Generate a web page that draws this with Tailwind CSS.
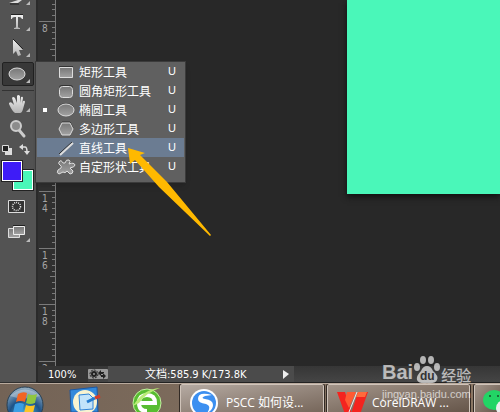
<!DOCTYPE html>
<html lang="zh-CN">
<head>
  <meta charset="UTF-8" />
  <meta name="viewport" content="width=device-width, initial-scale=1.0"/>
  <title>PSCC</title>
  <!-- Tailwind CSS CDN -->
  <script src="https://cdn.jsdelivr.net/npm/@tailwindcss/browser@4"></script>
</head>
<body class="relative h-screen overflow-hidden flex flex-col bg-[#282828] text-xs text-white font-['Noto_Sans','Noto_Sans_CJK_SC',sans-serif]">

  <!-- Shared gradients -->
  <svg class="absolute w-0 h-0" aria-hidden="true">
    <defs>
      <linearGradient id="metal" x1="0" y1="0" x2="0" y2="1"><stop offset="0" stop-color="#777"/><stop offset="1" stop-color="#a2a2a2"/></linearGradient>
      <linearGradient id="silver" x1="0" y1="0" x2="0" y2="1"><stop offset="0" stop-color="#f0f0f0"/><stop offset="1" stop-color="#b4b4b4"/></linearGradient>
      <radialGradient id="orb" cx=".5" cy=".8" r=".8"><stop offset="0" stop-color="#4fc3ea"/><stop offset=".55" stop-color="#1d5288"/><stop offset="1" stop-color="#9db5c6"/></radialGradient>
    </defs>
  </svg>

  <main class="flex-1 min-h-0 flex">
    <!-- Toolbar -->
    <aside class="w-9 shrink-0 flex flex-col items-center bg-[#535353] border-b border-[#303030]">
      <button class="block h-2 w-full overflow-hidden" aria-label="Pen">
        <svg class="block w-full h-2" viewBox="0 0 36 8"><path d="M9 3 18 0h4l-4 3Z" fill="#ddd"/><path d="M10 4h9" stroke="#222"/><path d="M30 1v4h-4Z" fill="#bbb"/></svg>
      </button>
      <button class="block h-7 w-full" aria-label="Type">
        <svg class="block w-full h-7" viewBox="0 0 36 28"><path d="M11 7h12v4h-1q-1-2-3-2h-1v10q0 1 2 1v1h-6v-1q2 0 2-1V9h-1q-3 0-3 2h-1Z" fill="url(#silver)"/><path d="M11 6.5h12" stroke="#222"/><path d="M30 19v4h-4Z" fill="#bbb"/></svg>
      </button>
      <button class="block h-[26px] w-full" aria-label="Path selection">
        <svg class="block w-full h-[26px]" viewBox="0 0 36 26"><path d="M13 3v15l3-3 2 5 3-1-2-5h4Z" fill="url(#silver)"/><path d="m13 3 10 10" stroke="#222"/><path d="M30 17v4h-4Z" fill="#bbb"/></svg>
      </button>
      <button class="block h-6 w-8 rounded-xs bg-[#383838] border border-[#222]" aria-label="Ellipse">
        <svg class="block w-full h-[22px]" viewBox="0 0 30 22"><ellipse cx="14" cy="11" rx="8" ry="6" fill="url(#metal)" stroke="#ddd"/><path d="M27 16v4h-4Z" fill="#bbb"/></svg>
      </button>
      <hr class="mt-1 w-8 border-t border-[#333]">
      <button class="block h-[26px] w-full" aria-label="Hand">
        <svg class="block w-full h-[26px]" viewBox="0 0 36 26"><path d="M9 12q2-2 4 1l1 1-2-7q1-2 3 0l2 5V5q1-2 3 0v7l1-6q2-1 2 1l-1 6 1-3q2-1 2 1l-2 7q-1 4-3 4h-5q-3-2-6-9Z" fill="url(#silver)"/><path d="M30 17v4h-4Z" fill="#bbb"/></svg>
      </button>
      <button class="block h-6 w-full" aria-label="Zoom">
        <svg class="block w-full h-6" viewBox="0 0 36 24"><path d="m19 13 5 6" stroke="#ccc" stroke-width="3" stroke-linecap="round"/><circle cx="16" cy="9" r="5" fill="#8c8c8c" stroke="#ccc" stroke-width="2"/></svg>
      </button>
      <button class="block h-4 w-full" aria-label="Switch colors">
        <svg class="block w-full h-4" viewBox="0 0 36 16"><path d="M5 7h7v7H5Z" fill="#ddd"/><path d="M2.5 4.5h6v6h-6Z" fill="#222" stroke="#ddd"/><path d="M22 6h3q2 0 2 5" fill="none" stroke="#ddd" stroke-width="1.5"/><path d="m19 6 4-3v6ZM24 10h6l-3 4Z" fill="#ddd"/></svg>
      </button>
      <div class="mt-1 w-full h-9 grid grid-cols-3 grid-rows-3 px-[2px] pb-2">
        <button class="col-start-1 row-start-1 z-10 size-5 bg-[#3e1cf7] border border-white outline outline-[#222]" aria-label="Foreground color"></button>
        <button class="col-start-2 row-start-2 size-5 bg-[#4af7b9] border border-white outline outline-[#222]" aria-label="Background color"></button>
      </div>
      <button class="block h-5 w-full" aria-label="Quick mask">
        <svg class="block w-full h-5" viewBox="0 0 36 20"><path d="M8.5 3.5h16v12h-16Z" fill="#333" stroke="#ddd"/><circle cx="16.5" cy="9.5" r="4" fill="none" stroke="#eee" stroke-width="1.5" stroke-dasharray="1 1"/></svg>
      </button>
      <button class="mt-1 block h-6 w-full" aria-label="Screen mode">
        <svg class="block w-full h-6" viewBox="0 0 36 24"><path d="M8.5 7.5h11v9h-11Z" fill="url(#metal)" stroke="#ddd"/><path d="M13.5 5.5h11v8h-11Z" fill="url(#metal)" stroke="#eee"/><path d="M13 4.5h12" stroke="#222"/><path d="M30 17v4h-4Z" fill="#bbb"/></svg>
      </button>
    </aside>

    <section class="flex-1 min-w-0 flex flex-col border-l-2 border-[#2a2a2a]">
      <div class="flex-1 min-h-0 flex">
        <!-- Vertical ruler -->
        <div class="w-[18px] shrink-0 overflow-hidden bg-[#303030]">
          <svg class="block w-[18px] h-[400px] font-['DejaVu_Sans_Condensed','DejaVu_Sans',sans-serif]" viewBox="0 0 18 400">
            <defs>
              <path id="ticks" d="M1 .5h16M14 6.5h3M14 11.5h3M14 17.5h3M14 23.5h3M12 28.5h5M14 34.5h3M14 40.5h3M14 45.5h3M14 51.5h3" stroke="#7a7a7a"/>
            </defs>
            <use href="#ticks" y="-36"/><use href="#ticks" y="21"/><use href="#ticks" y="78"/><use href="#ticks" y="134"/>
            <use href="#ticks" y="191"/><use href="#ticks" y="248"/><use href="#ticks" y="304"/><use href="#ticks" y="361"/>
            <path d="M17.5 0v400" stroke="#7a7a7a"/>
            <g fill="#a5a5a5" font-size="10">
              <text x="4" y="32">8</text>
              <text x="4" y="202">1</text><text x="4" y="212">4</text>
              <text x="4" y="259">1</text><text x="4" y="269">6</text>
              <text x="4" y="315">1</text><text x="4" y="325">8</text>
              <text x="4" y="372">2</text>
            </g>
          </svg>
        </div>
        <!-- Document -->
        <div class="flex-1 min-w-0 overflow-hidden pl-[291px]">
          <div class="h-[194px] bg-[#4af7b9] shadow-[0_3px_6px_#111]"></div>
        </div>
      </div>

      <!-- Status bar -->
      <footer class="h-[17px] shrink-0 flex items-stretch bg-linear-to-b from-[#363636] to-[#454545] border-b border-[#222] font-['DejaVu_Sans_Condensed','Noto_Sans_CJK_SC',sans-serif] text-[11px] leading-4">
        <input type="text" value="100%" aria-label="Zoom level" class="w-[50px] pl-[10px] pt-px bg-[#353535] outline-none">
        <button class="w-5 flex items-center" aria-label="Settings">
          <svg class="block w-5 h-3" viewBox="0 0 20 12"><rect y="1" width="20" height="10" rx="1" fill="#999"/><circle cx="6" cy="6" r="2" fill="none" stroke="#222" stroke-width="2"/><circle cx="6" cy="6" r="4" fill="none" stroke="#222" stroke-dasharray="2 1"/><path d="m10 5 3-3v2h3v2h-3v2ZM18 8l-3-3v2h-2v2h2v2Z" fill="#222"/></svg>
        </button>
        <div class="w-[186px] pl-[37px] pr-1 pt-px flex justify-between items-center bg-[#4b4b4b]">
          <span class="whitespace-nowrap">文档:585.9 K/173.8K</span>
          <button aria-label="Status menu"><svg class="block w-2 h-3" viewBox="0 0 8 12"><path d="M1 1v9l6-5Z" fill="#eee"/></svg></button>
        </div>
      </footer>
    </section>
  </main>

  <!-- Taskbar -->
  <nav class="h-[29px] shrink-0 flex bg-linear-to-r from-[#736356] to-[#8c7865] border-t border-[#b9aa9d] overflow-hidden font-['Open_Sans','Noto_Sans_CJK_SC',sans-serif]">
    <div class="w-[180px] shrink-0 flex">
      <button class="w-14 shrink-0" aria-label="Start">
        <svg class="block w-14 h-7" viewBox="0 0 56 28"><circle cx="25" cy="21" r="18" fill="url(#orb)" stroke="#263f54"/><path d="M10 12q15-13 30 0-15 5-30 0Z" fill="#fff" opacity=".3"/><path d="m18 10q5-3 9-1l-2 9q-5-2-9 0Z" fill="#f16524"/><path d="m28 10q4 2 9 0l-2 9q-5 2-9 0Z" fill="#8fc63f"/><path d="m15 20q5-2 9 0l-2 9h-9Z" fill="#3c9ee4"/><path d="m26 21q4 2 9 0l-2 8h-9Z" fill="#fcc425"/></svg>
      </button>
      <button class="w-[62px] shrink-0" aria-label="Notes">
        <svg class="block w-[62px] h-7" viewBox="0 0 62 28"><path d="m14 6 27-3 1 25H15Z" fill="#3289dc" stroke="#1d57a0"/><circle cx="29" cy="18" r="12" fill="#f8f3d1"/><path d="m23 11 10-1 4 4v11l-13 1Z" fill="#c2e3fa" stroke="#2e83d8"/><path d="m31 18 8-4" stroke="#247bcf" stroke-width="3"/><path d="m39 14 5-2" stroke="#d33b28" stroke-width="3"/></svg>
      </button>
      <button class="w-[61px] shrink-0" aria-label="Browser">
        <svg class="block w-[61px] h-7" viewBox="0 0 61 28"><circle cx="29" cy="19" r="14" fill="#58bd31" stroke="#c3efa2"/><path d="M21 19h16q0-8-8-8t-8 8 8 8" fill="none" stroke="#fff" stroke-width="4"/><path d="M15 22Q25 5 42 4q-13 4-21 15" fill="#b9ec77"/></svg>
      </button>
    </div>
    <button class="w-36 shrink-0 flex items-center gap-2 pl-[9px] pt-2 border border-b-0 border-[#d0c4ba] rounded-t-xs bg-linear-to-br from-[#b5aaa2] to-[#77675b] outline outline-[#322a25]">
      <svg class="block size-7 shrink-0" viewBox="0 0 28 28"><circle cx="14" cy="14" r="14" fill="#fff"/><circle cx="14" cy="14" r="12" fill="#3c8ff0"/><path d="M22 6Q8 2 8 10q0 4 8 5 6 2 1 9 6-3 6-8 0-5-8-6-5-1 0-3Z" fill="#fff"/></svg>
      <span class="whitespace-nowrap">PSCC 如何设...</span>
    </button>
    <button class="ml-[3px] w-[143px] shrink-0 flex items-center gap-1 pl-[9px] pt-2 border border-b-0 border-[#d0c4ba] rounded-t-xs bg-linear-to-br from-[#a3958a] to-[#66564a] outline outline-[#322a25]">
      <svg class="block w-[31px] h-7 shrink-0" viewBox="0 0 31 28"><path d="M0 3h8l8 25H9Z" fill="#f4241f"/><path d="M10 3h9l-7 16-4-8Z" fill="#ff5a33"/><path d="M21 3h10L22 28h-9Z" fill="#f4241f"/><path d="M21 3h9l-2 5h-9Z" fill="#ff6a3c"/><path d="m20 3-8 20" stroke="#eee" fill="none"/></svg>
      <span class="whitespace-nowrap">CorelDRAW ...</span>
    </button>
    <button class="ml-1 flex-1 min-w-0 overflow-hidden pl-2 border border-b-0 border-r-0 border-[#d0c4ba] rounded-tl-xs bg-linear-to-br from-[#a3958a] to-[#66564a] outline outline-[#322a25]" aria-label="WeChat">
      <svg class="block w-7 h-7" viewBox="0 0 28 28"><ellipse cx="11" cy="15" rx="11" ry="10" fill="#22d565"/><circle cx="7" cy="11" r="1" fill="#164c2a"/><circle cx="15" cy="11" r="1" fill="#164c2a"/><ellipse cx="22" cy="23" rx="9" ry="8" fill="#eee"/></svg>
    </button>
  </nav>

  <!-- Shape tool flyout -->
  <menu class="absolute left-[35px] top-[61px] w-[151px] px-px pb-[6px] bg-[#606060] border border-[#3b3b3b] shadow-md font-['Noto_Sans_CJK_SC',sans-serif] leading-[19px]">
    <li><button class="w-full h-[19px] flex items-center pl-[19px] pr-2">
      <svg class="size-5" viewBox="0 0 20 20"><path d="M3.5 5.5h13v10h-13Z" fill="url(#metal)" stroke="#ddd"/><path d="M3 4.5h14" stroke="#333"/></svg>
      <span class="flex-1 text-left pl-[3px]">矩形工具</span><span class="font-['Liberation_Sans'] text-[11px]">U</span>
    </button></li>
    <li><button class="w-full h-[19px] flex items-center pl-[19px] pr-2">
      <svg class="size-5" viewBox="0 0 20 20"><rect x="3" y="4" width="14" height="12" rx="3" fill="#333"/><rect x="3.5" y="5.5" width="13" height="11" rx="3" fill="url(#metal)" stroke="#ddd"/></svg>
      <span class="flex-1 text-left pl-[3px]">圆角矩形工具</span><span class="font-['Liberation_Sans'] text-[11px]">U</span>
    </button></li>
    <li><button class="w-full h-[19px] flex items-center pl-[6px] pr-2">
      <span class="size-1 mr-[9px] bg-white"></span>
      <svg class="size-5" viewBox="0 0 20 20"><ellipse cx="10" cy="9" rx="8" ry="6" fill="#333"/><ellipse cx="10" cy="10" rx="8" ry="6" fill="url(#metal)" stroke="#ddd"/></svg>
      <span class="flex-1 text-left pl-[3px]">椭圆工具</span><span class="font-['Liberation_Sans'] text-[11px]">U</span>
    </button></li>
    <li><button class="w-full h-[19px] flex items-center pl-[19px] pr-2">
      <svg class="size-5" viewBox="0 0 20 20"><path d="m6 3h8l3 6" fill="none" stroke="#333"/><path d="M6 4h8l3 6-3 6H6l-3-6Z" fill="url(#metal)" stroke="#ddd"/></svg>
      <span class="flex-1 text-left pl-[3px]">多边形工具</span><span class="font-['Liberation_Sans'] text-[11px]">U</span>
    </button></li>
    <li><button class="w-full h-[19px] flex items-center pl-[19px] pr-2 bg-[#6b7c92]">
      <svg class="size-5" viewBox="0 0 20 20"><path d="M3 16 16 4" stroke="#222"/><path d="M4 17 17 5" stroke="#ddd" stroke-width="2"/></svg>
      <span class="flex-1 text-left pl-[3px]">直线工具</span><span class="font-['Liberation_Sans'] text-[11px]">U</span>
    </button></li>
    <li><button class="w-full h-[19px] flex items-center pl-[19px] pr-2">
      <svg class="size-5" viewBox="0 0 20 20"><path d="M3 5q2-3 4 1h2q1-4 4-3 2 1 0 4 5-2 6 1 0 2-5 3l3 3q0 3-3 3l-3-3q-2 3-4 1l-4 2q-3-1-1-4l3-2q1-2-1-3-2-1-1-3Z" fill="url(#metal)" stroke="#ddd"/></svg>
      <span class="flex-1 text-left pl-[3px]">自定形状工具</span><span class="font-['Liberation_Sans'] text-[11px]">U</span>
    </button></li>
  </menu>

  <!-- Pointer arrow -->
  <svg class="absolute left-[120px] top-[140px] w-[100px] h-[100px] pointer-events-none" viewBox="0 0 100 100"><path d="M8 8 25 13 20 15 47 42 91 95 90 96 39 47 15 20 10 24Z" fill="#ffb900"/></svg>

  <!-- Watermark -->
  <div class="absolute right-7 bottom-[10px] w-[90px] text-white/65 pointer-events-none">
    <div class="relative flex items-end h-8 leading-5 font-['Liberation_Sans','Noto_Sans_CJK_SC',sans-serif]">
      <span class="text-xl font-bold">Bai</span>
      <svg class="w-7 h-8 shrink-0" viewBox="0 0 28 32"><g fill="currentColor"><ellipse cx="4" cy="13" rx="3" ry="4"/><ellipse cx="10" cy="6" rx="3" ry="4"/><ellipse cx="18" cy="6" rx="3" ry="4"/><ellipse cx="24" cy="13" rx="3" ry="4"/><path d="M14 12q4 0 6 5 6 5 4 9-2 4-10 3-8 1-10-3-1-4 4-9 2-5 6-5Z"/></g><text x="7" y="26" font-size="12" font-weight="700" fill="#333">du</text></svg>
      <span class="text-[15px] whitespace-nowrap font-medium">经验</span>
    </div>
    <div class="text-[11px] leading-4 whitespace-nowrap font-['Liberation_Sans',sans-serif]">jingyan.baidu.com</div>
  </div>
</body>
</html>
